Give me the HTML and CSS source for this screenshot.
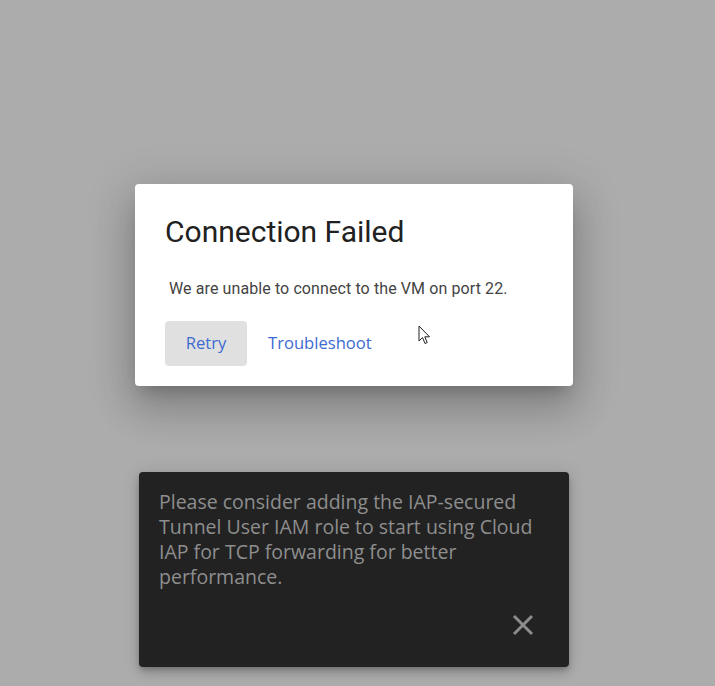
FILE: index.html
```html
<!DOCTYPE html>
<html>
<head>
<meta charset="utf-8">
<link rel="stylesheet" href="styles.css">
</head>
<body>
<div class="page">
  <div class="dialog">
    <h1 class="title">Connection Failed</h1>
    <p class="message">We are unable to connect to the VM on port 22.</p>
    <div class="actions">
      <button class="btn btn-filled">Retry</button>
      <button class="btn btn-text">Troubleshoot</button>
    </div>
    <svg class="cursor" width="13" height="20" viewBox="0 0 13 20">
      <path d="M1 1 L1 16 L4.5 12.5 L7 18.5 L9.2 17.6 L6.8 11.8 L11.5 11.8 Z" fill="#fff" stroke="#222" stroke-width="1" stroke-linejoin="round"/>
    </svg>
  </div>
  <div class="snackbar">
    <p class="snack-text">Please consider adding the IAP-secured Tunnel User IAM role to start using Cloud IAP for TCP forwarding for better performance.</p>
    <div class="snack-actions">
      <svg class="close" width="22" height="22" viewBox="0 0 22 22">
        <path d="M2 2 L20 20 M20 2 L2 20" stroke="#8c8c8c" stroke-width="3" stroke-linecap="butt"/>
      </svg>
    </div>
  </div>
</div>
</body>
</html>
```
FILE: styles.css
```css
html, body {
  margin: 0;
  padding: 0;
  background: #acacac;
  height: 100%;
  overflow: hidden;
}
.page {
  display: flex;
  flex-direction: column;
  align-items: flex-start;
  padding: 184px 0 0 135px;
}
.dialog {
  position: relative;
  box-sizing: border-box;
  width: 438px;
  height: 202px;
  background: #fff;
  border-radius: 4px;
  padding: 30px 30px 0 30px;
  box-shadow: 0 11px 15px -7px rgba(0,0,0,0.2), 0 24px 38px 3px rgba(0,0,0,0.14), 0 9px 46px 8px rgba(0,0,0,0.12);
}
.title {
  margin: 0;
  font-family: Roboto, "Liberation Sans", sans-serif;
  font-weight: 400;
  font-size: 30px;
  line-height: 36px;
  color: #212121;
}
.message {
  margin: 27px 0 0 4px;
  font-family: Roboto, "Liberation Sans", sans-serif;
  font-size: 16px;
  letter-spacing: 0.1px;
  line-height: 24px;
  color: #444;
}
.actions {
  display: flex;
  gap: 4px;
  margin-top: 20px;
}
.btn {
  font-family: "Open Sans", sans-serif;
  font-size: 16.6px;
  color: #3c6bd1;
  border: none;
  border-radius: 4px;
  height: 45px;
  padding: 0 17px 3px;
  background: transparent;
}
.btn-filled {
  background: #e0e0e0;
  width: 82px;
  padding: 0 0 3px;
}
.cursor {
  position: absolute;
  left: 283px;
  top: 141px;
}
.snackbar {
  box-sizing: border-box;
  margin: 86px 0 0 4px;
  width: 430px;
  height: 195px;
  background: #222;
  border-radius: 4px;
  padding: 17px 20px 0 20px;
  display: flex;
  flex-direction: column;
  box-shadow: 0 3px 5px -1px rgba(0,0,0,0.2), 0 6px 10px 0 rgba(0,0,0,0.14), 0 1px 18px 0 rgba(0,0,0,0.12);
}
.snack-text {
  margin: 0;
  width: 385px;
  font-family: "Open Sans", sans-serif;
  font-size: 19.5px;
  line-height: 25px;
  color: #8e8e8e;
}
.snack-actions {
  display: flex;
  justify-content: flex-end;
  margin-top: 25px;
  padding-right: 15px;
}
```
